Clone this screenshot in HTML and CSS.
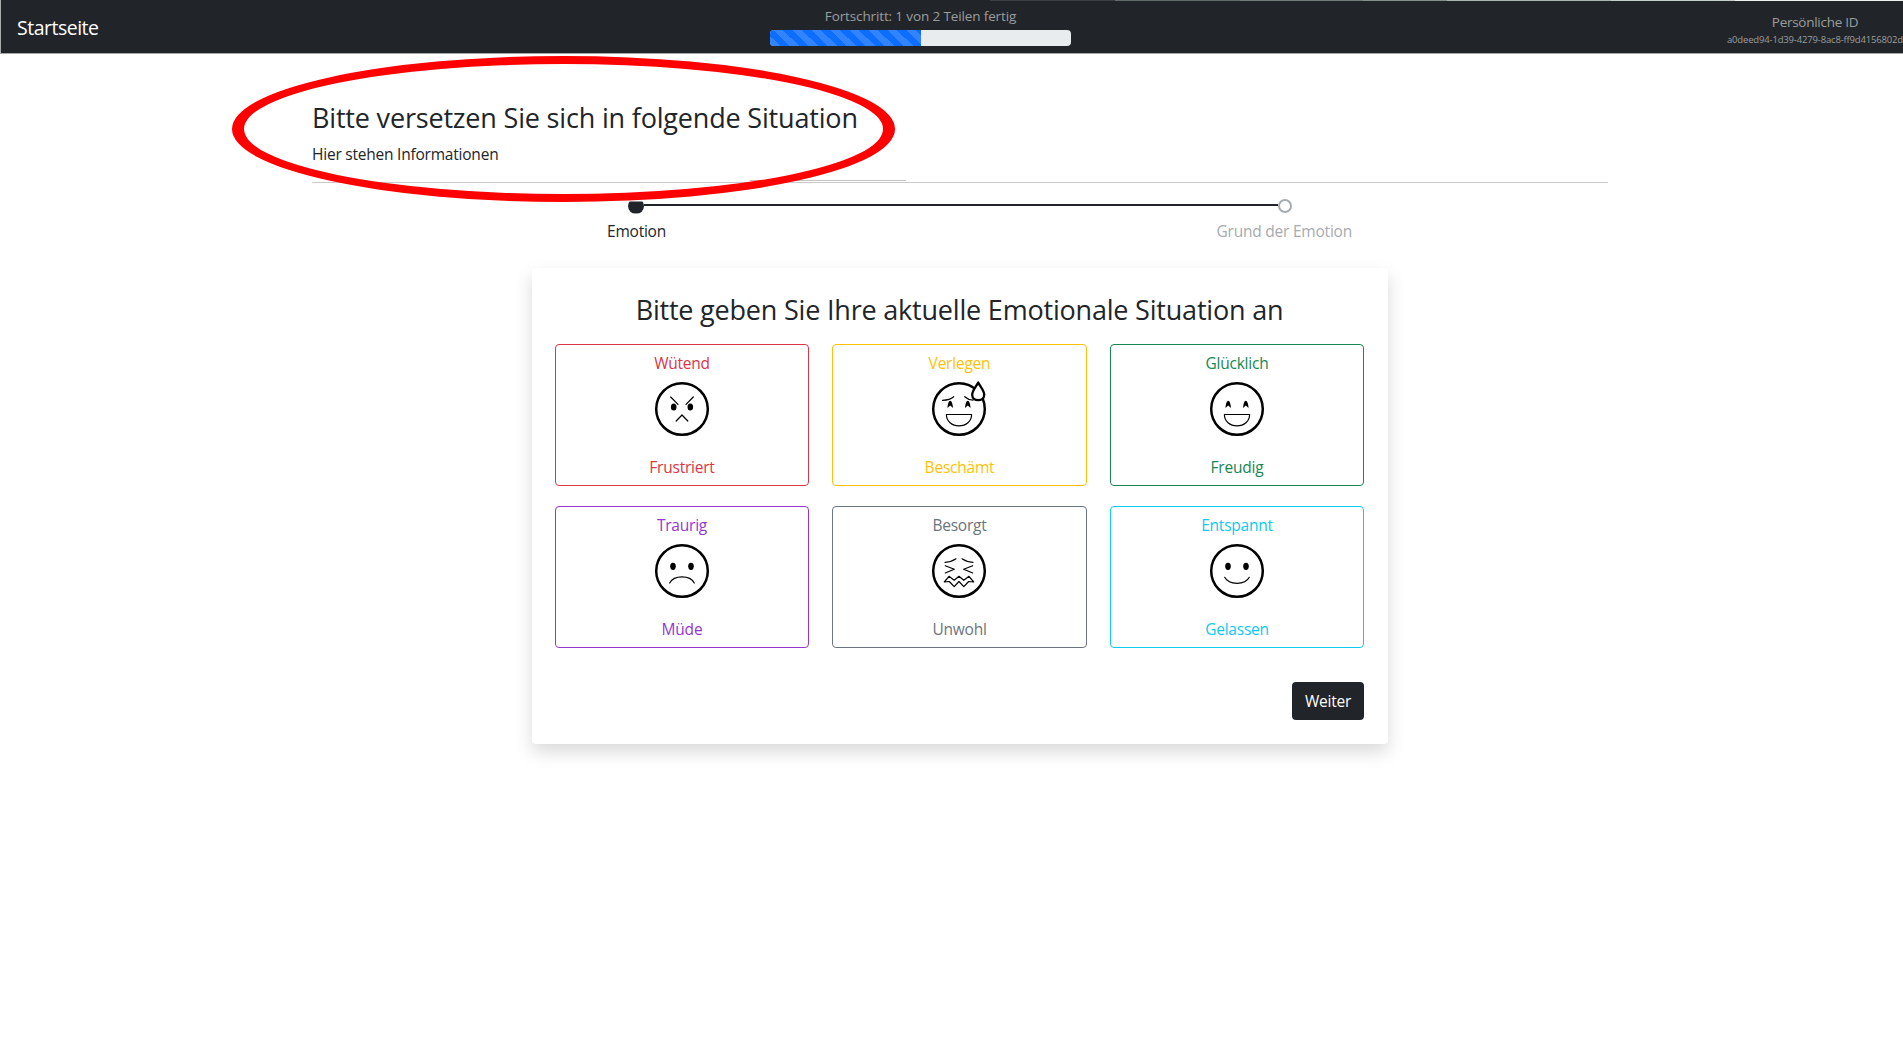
FILE: index.html
```html
<!DOCTYPE html>
<html lang="de">
<head>
<meta charset="utf-8">
<title>Startseite</title>
<link rel="stylesheet" href="styles.css">
</head>
<body>
<header class="navbar">
  <a class="brand">Startseite</a>
  <div class="progress-info">
    <div class="progress-label">Fortschritt: 1 von 2 Teilen fertig</div>
    <div class="progress"><div class="progress-bar" style="width:50%"></div></div>
  </div>
  <div class="user">
    <div class="user-title">Persönliche ID</div>
    <div class="user-id">a0deed94-1d39-4279-8ac8-ff9d4156802d</div>
  </div>
</header>
<main class="content">
  <section class="intro">
    <h1 class="title">Bitte versetzen Sie sich in folgende Situation</h1>
    <p class="info">Hier stehen Informationen</p>
    <div class="rule-short"></div>
    <div class="rule"></div>
    <div class="highlight"></div>
  </section>
  <section class="stepper">
    <div class="track"><i class="dot done"></i><i class="line"></i><i class="dot"></i></div>
    <div class="steps"><span class="step active">Emotion</span><span class="step next">Grund der Emotion</span></div>
  </section>
  <section class="card">
    <h2 class="question">Bitte geben Sie Ihre aktuelle Emotionale Situation an</h2>
    <div class="options">
      <div class="option angry"><span>Wütend</span>
        <svg class="face" viewBox="-30 -30 60 60"><circle class="head" r="25.8"/><path d="M-11.3-12-4-4.7M11.3-12 4-4.7M-5.8 12 0 6l5.8 6"/><g class="eyes"><ellipse cx="-8.3" cy="-2" rx="2.8" ry="3.5"/><ellipse cx="8.3" cy="-2" rx="2.8" ry="3.5"/></g></svg>
        <span>Frustriert</span></div>
      <div class="option shy"><span>Verlegen</span>
        <svg class="face" viewBox="-30 -30 60 60"><circle class="head" r="25.8"/><path d="M-16.5-8.7Q-9-9-5.3-12.3M5.7-12.3Q9-9.3 14-8.8M-12.6 5.5H12.6C12.6 12.5 7 16.8 0 16.8S-12.6 12.5-12.6 5.5Z"/><g class="eyes"><path d="M-11.6-1Q-11-8-8.8-8.3Q-6.6-8-6-1L-8.8-3.6ZM6-1Q6.6-8 8.8-8.3Q11-8 11.6-1L8.8-3.6Z"/></g><path class="drop" d="M19.2-26.5C17-22 13.2-18.5 13.2-14.3C13.2-10.8 16-8.8 19.2-8.8S25.2-10.8 25.2-14.3C25.2-18.5 21.4-22 19.2-26.5Z"/></svg>
        <span>Beschämt</span></div>
      <div class="option happy"><span>Glücklich</span>
        <svg class="face" viewBox="-30 -30 60 60"><circle class="head" r="25.8"/><path d="M-12.6 5.5H12.6C12.6 12.5 7 16.8 0 16.8S-12.6 12.5-12.6 5.5Z"/><g class="eyes"><path d="M-11.6-1Q-11-8-8.8-8.3Q-6.6-8-6-1L-8.8-3.6ZM6-1Q6.6-8 8.8-8.3Q11-8 11.6-1L8.8-3.6Z"/></g></svg>
        <span>Freudig</span></div>
      <div class="option sad"><span>Traurig</span>
        <svg class="face" viewBox="-30 -30 60 60"><circle class="head" r="25.8"/><path d="M-12.3 12C-8 3.8 8 3.8 12.3 12"/><g class="eyes"><ellipse cx="-9" cy="-4.7" rx="2.8" ry="3.6"/><ellipse cx="9" cy="-4.7" rx="2.8" ry="3.6"/></g></svg>
        <span>Müde</span></div>
      <div class="option worried"><span>Besorgt</span>
        <svg class="face" viewBox="-30 -30 60 60"><circle class="head" r="25.8"/><path d="M-14-8.7Q-8-8.8-3-12.2M14-8.7Q8-8.8 3-12.2M-13.7-5.3-4.7-1.7-13.7 2M13.7-5.3 4.7-1.7 13.7 2M-14.7 11-10 5.3-4.8 9.2 0 5.3 4.8 9.2 10 5.3 14.7 11 9.7 10.5 4.8 15.7 0 10.5-4.8 15.7-9.7 10.5Z"/></svg>
        <span>Unwohl</span></div>
      <div class="option calm"><span>Entspannt</span>
        <svg class="face" viewBox="-30 -30 60 60"><circle class="head" r="25.8"/><path d="M-12.3 6.3C-8 14.3 8 14.3 12.3 6.3"/><g class="eyes"><ellipse cx="-9" cy="-4.7" rx="2.8" ry="3.6"/><ellipse cx="9" cy="-4.7" rx="2.8" ry="3.6"/></g></svg>
        <span>Gelassen</span></div>
    </div>
    <div class="actions"><button class="next-button">Weiter</button></div>
  </section>
</main>
</body>
</html>
```
FILE: styles.css
```css
* { box-sizing: border-box; }
body {
  margin: 0;
  height: 1063px;
  overflow: hidden;
  background: #fff;
  color: #212529;
  font-family: "Open Sans", "Noto Sans", sans-serif;
  font-size: 15.5px;
  line-height: 24px;
  letter-spacing: -.22px;
}
h1, h2, p { margin: 0; font-weight: 400; }

.navbar {
  display: grid;
  grid-template-columns: 753px 301px 1fr;
  height: 54px;
  padding-left: 17px;
  background:
    linear-gradient(90deg, transparent 990px, #3a3f42 990px 1115px, #646c6b 1115px 1240px, #737b7a 1240px 1363px, #868e8c 1363px 1447px, #abb3b0 1447px 1611px, #c5cdc9 1611px 1735px, #eef0ef 1735px) 0 0 / 100% 1px no-repeat,
    linear-gradient(#a5a7a8, #a5a7a8) 0 100% / 100% 1px no-repeat,
    #212529;
  box-shadow: inset 1px 0 #a9abac;
  overflow: hidden;
}
.brand { padding-top: 13px; color: #fff; font-size: 19.5px; line-height: 30px; letter-spacing: -.5px; }
.progress-info { padding-top: 5px; color: #9b9d9e; text-align: center; }
.progress-label { font-size: 13.5px; line-height: 22px; letter-spacing: -.13px; }
.progress { height: 16px; margin-top: 3px; border-radius: 4px; background: #e9ecef; overflow: hidden; }
.progress-bar {
  height: 100%;
  background: #0d6efd linear-gradient(45deg, rgba(255,255,255,.15) 25%, transparent 25%, transparent 50%, rgba(255,255,255,.15) 50%, rgba(255,255,255,.15) 75%, transparent 75%) 2px 0 / 19px 16px;
}
.user { justify-self: end; width: 176px; padding-top: 11px; color: #9b9d9e; white-space: nowrap; }
.user-title { font-size: 13.5px; line-height: 22px; text-align: center; letter-spacing: -.28px; }
.user-id { font-size: 9.5px; line-height: 13px; letter-spacing: -.17px; }

.content { padding: 47px 295px 0 312px; }
.intro { position: relative; }
.title { font-size: 27px; line-height: 34px; letter-spacing: -.18px; }
.info { margin-top: 7px; }
.rule-short { width: 156px; height: 1px; margin: 14px 0 1px 438px; background: #c4c4c4; }
.rule { height: 1px; background: #cacaca; }
.highlight {
  position: absolute;
  left: -80px;
  top: -45px;
  width: 663px;
  height: 146px;
  border: solid #f00;
  border-width: 8px 12.5px;
  border-radius: 50%;
}

.stepper { width: 746px; margin: 14px 0 0 294px; }
.track { display: flex; align-items: center; height: 17px; padding: 0 60px 0 22px; }
.dot { width: 14px; height: 14px; border: 2px solid #a6abaf; border-radius: 50%; }
.dot.done { width: 16px; height: 16px; border: 0; background: #212529; clip-path: inset(4px 0 0); }
.line { flex: 1; height: 2px; margin-bottom: 1px; background: #212529; }
.steps { display: flex; justify-content: space-between; margin-top: 5px; padding-left: 1px; }
.next { color: #a6abaf; }

.card {
  width: 856px;
  height: 476px;
  margin: 25px 0 0 220px;
  padding: 25px 24px 24px 23px;
  border-radius: 4px;
  box-shadow: 0 8px 18px rgba(0,0,0,.15);
}
.question { font-size: 27px; line-height: 34px; text-align: center; letter-spacing: -.2px; }
.options { display: grid; grid-template-columns: 254px 255px 254px; gap: 20px 23px; margin-top: 17px; }
.option {
  display: flex;
  flex-direction: column;
  align-items: center;
  height: 142px;
  padding-top: 6px;
  border: 1px solid;
  border-radius: 4px;
}
.face { width: 60px; height: 60px; margin: 4px 0 16px; overflow: visible; fill: none; stroke: #000; stroke-width: 1.2; stroke-linecap: round; stroke-linejoin: round; }
.shy .face, .worried .face { margin-right: 1px; }
.head { stroke-width: 2.5; }
.eyes { fill: #000; stroke: none; }
.drop { fill: #fff; stroke-width: 2.3; }
.angry { color: #dc3545; }
.shy { color: #ffc107; }
.happy { color: #198754; }
.sad { color: #9437cf; }
.worried { color: #6c757d; }
.calm { color: #0dcaf0; }
.actions { display: flex; justify-content: flex-end; margin-top: 34px; }
.next-button { width: 72px; height: 38px; padding: 0; border: 0; border-radius: 4px; background: #212529; color: #fff; font: inherit; letter-spacing: inherit; }
```
